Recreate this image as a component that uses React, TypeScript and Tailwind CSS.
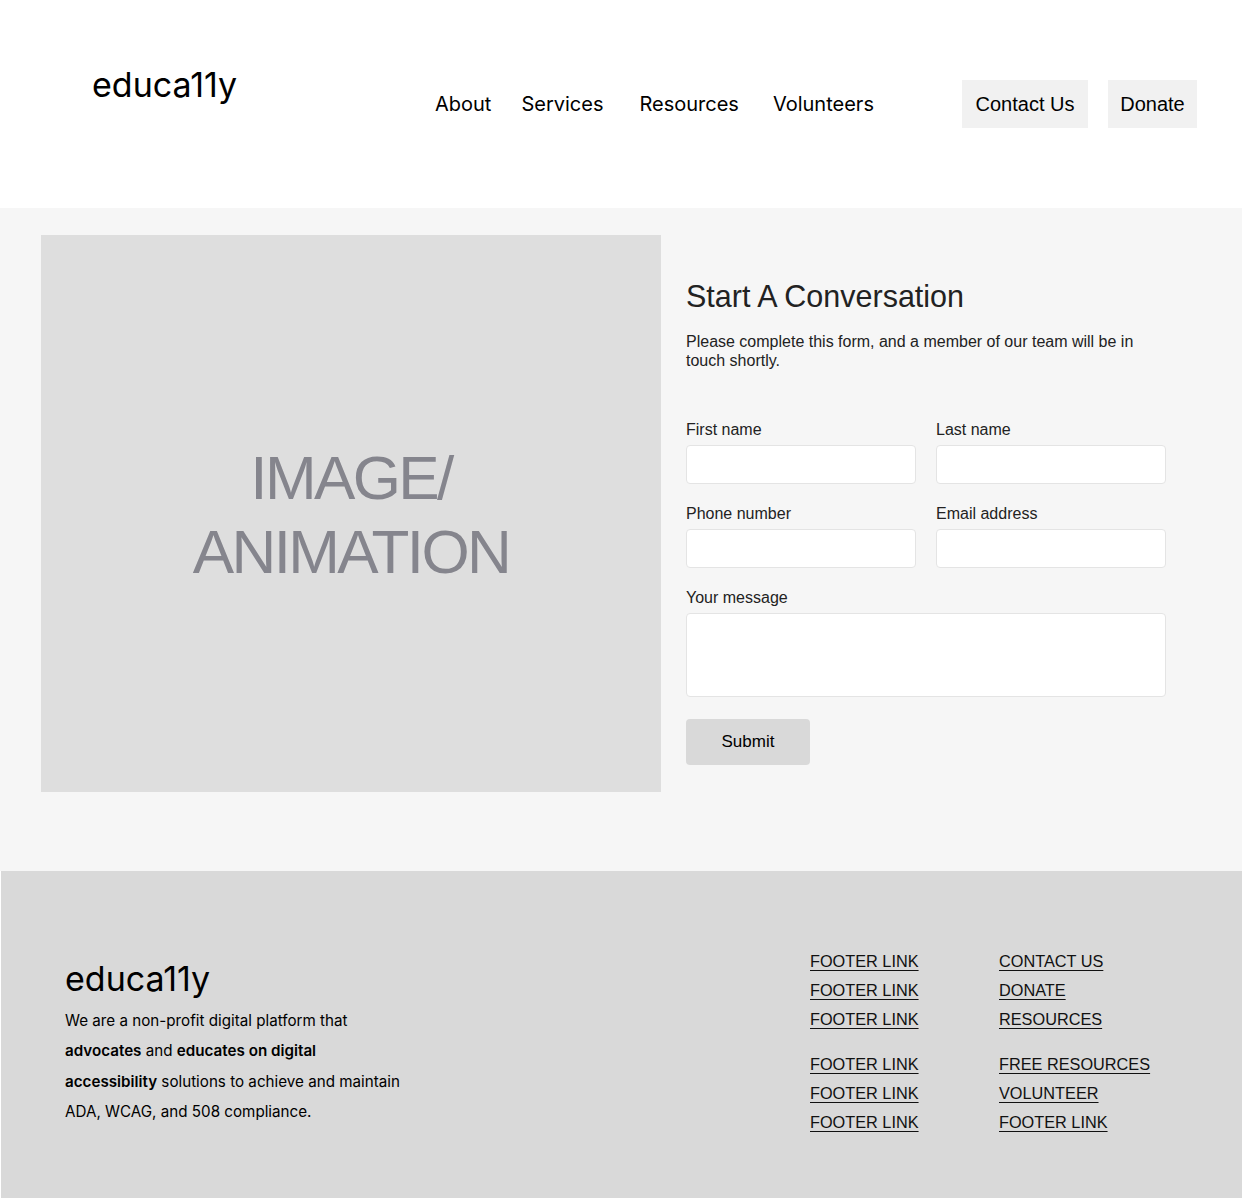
const inter = "font-['Inter','Noto_Sans',sans-serif]";
const helv = "font-['Liberation_Sans','Arial',sans-serif]";

const navLinks = ["About", "Services", "Resources", "Volunteers"];
const navMargins = ["mr-[30px]", "mr-[36px]", "mr-[34px]", ""];

const linkCols = [
  [
    ["FOOTER LINK", "FOOTER LINK", "FOOTER LINK"],
    ["FOOTER LINK", "FOOTER LINK", "FOOTER LINK"],
  ],
  [
    ["CONTACT US", "DONATE", "RESOURCES"],
    ["FREE RESOURCES", "VOLUNTEER", "FOOTER LINK"],
  ],
];

const Field = ({ label, area }: { label: string; area?: boolean }) => (
  <label className="flex flex-col">
    <span className="text-[16px] leading-[20px] text-[#222] mb-[5px]">{label}</span>
    {area ? (
      <textarea className="h-[84px] w-full bg-white border border-[#e4e4e4] rounded-[4px] resize-none outline-none" />
    ) : (
      <input className="h-[39px] w-full bg-white border border-[#e4e4e4] rounded-[4px] outline-none" />
    )}
  </label>
);

const App = () => {
  return (
    <div className="w-[1242px] min-h-[1198px] bg-white text-black">
      <header className="h-[208px] flex items-start pt-[80px] pl-[92px]">
        <div className={`w-[343px] -mt-[15px] text-[34px] leading-[40px] text-black ${inter}`}>educa11y</div>
        <nav className={`w-[527px] flex items-center h-[48px] text-[20px] ${inter}`}>
          {navLinks.map((l, i) => (
            <a key={l} href="#" className={navMargins[i]}>
              {l}
            </a>
          ))}
        </nav>
        <div className={`flex gap-[20px] text-[20px] ${helv}`}>
          <button className="h-[48px] w-[126px] bg-[#f1f1f1]">Contact Us</button>
          <button className="h-[48px] w-[89px] bg-[#f1f1f1]">Donate</button>
        </div>
      </header>

      <main className={`bg-[#f6f6f6] h-[663px] flex pt-[27px] pl-[41px] ${helv}`}>
        <div className="w-[620px] h-[557px] bg-[#dedede] flex items-center justify-center">
          <div className="text-center text-[62px] leading-[74px] tracking-[-2.6px] text-[#85858d] mt-[2px]">
            IMAGE/
            <br />
            ANIMATION
          </div>
        </div>
        <div className="ml-[25px] w-[480px] pt-[43px]">
          <h1 className="text-[30.5px] leading-[36px] text-[#222]">Start A Conversation</h1>
          <p className="mt-[18px] text-[16px] leading-[19px] text-[#222] pr-[20px]">
            Please complete this form, and a member of our team will be in touch shortly.
          </p>
          <form className="mt-[50px] flex flex-col gap-[20px]" onSubmit={(e) => e.preventDefault()}>
            <div className="grid grid-cols-2 gap-x-[20px] gap-y-[20px]">
              <Field label="First name" />
              <Field label="Last name" />
              <Field label="Phone number" />
              <Field label="Email address" />
            </div>
            <Field label="Your message" area />
            <button
              type="submit"
              className="mt-[2px] w-[124px] h-[46px] bg-[#d9d9d9] rounded-[4px] text-[17px] text-black"
            >
              Submit
            </button>
          </form>
        </div>
      </main>

      <footer className="bg-[#d9d9d9] h-[327px] ml-[1px] flex pt-[76px]">
        <div className={`w-[809px] pl-[64px] pt-[12px] ${inter}`}>
          <div className="text-[34px] leading-[40px]">educa11y</div>
          <p className="mt-[7px] text-[15.2px] leading-[30.3px]">
            We are a non-profit digital platform that
            <br />
            <b className="font-semibold">advocates</b> and <b className="font-semibold">educates on digital</b>
            <br />
            <b className="font-semibold">accessibility</b> solutions to achieve and maintain
            <br />
            ADA, WCAG, and 508 compliance.
          </p>
        </div>
        {linkCols.map((col, ci) => (
          <div key={ci} className={`${ci === 0 ? "w-[189px]" : ""} flex flex-col gap-[16px] ${helv}`}>
            {col.map((group, gi) => (
              <ul key={gi} className="flex flex-col">
                {group.map((l, li) => (
                  <li key={li} className="text-[16.3px] leading-[29px] text-[#111]">
                    <a href="#" className="underline underline-offset-[3px]">
                      {l}
                    </a>
                  </li>
                ))}
              </ul>
            ))}
          </div>
        ))}
      </footer>
    </div>
  );
};

export default App;
